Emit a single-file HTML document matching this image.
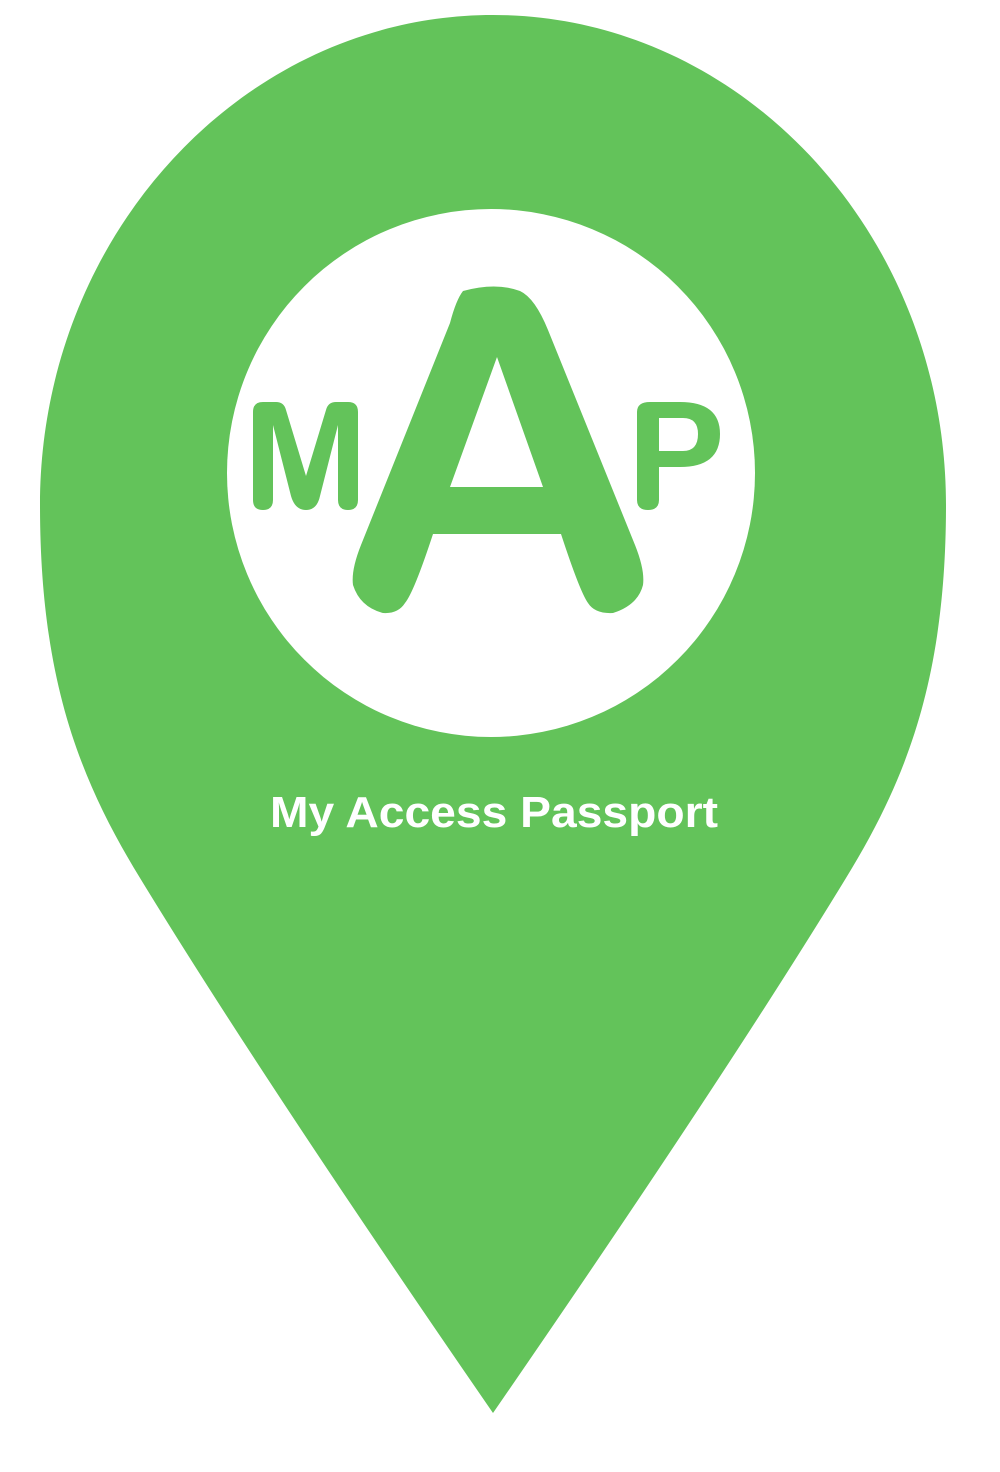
<!DOCTYPE html>
<html><head><meta charset="utf-8"><style>
html,body{margin:0;padding:0;background:#fff;width:1000px;height:1472px;overflow:hidden}
svg{display:block}
</style></head><body>
<svg width="1000" height="1472" viewBox="0 0 1000 1472" xmlns="http://www.w3.org/2000/svg">
<path d="M493 15 C 244 15 40 235 40 505 C 40 680 80 780 140 878 Q 262 1078 493 1413 Q 724 1078 846 878 C 906 780 946 680 946 505 C 946 235 742 15 493 15 Z" fill="#63c35a"/>
<circle cx="491" cy="473" r="264" fill="#fff"/>
<g fill="#63c35a">
<path fill-rule="evenodd" d="M463 291 Q496 282 520 291 Q535 298 548 330 L635 545 Q645 570 643 585 Q638 605 613 613 Q595 614 588 603 Q580 592 561 534 L433 534 Q414 592 405 603 Q398 614 383 613 Q360 607 353 585 Q351 570 361 545 L450 323 Q456 300 463 291 Z M497 357 L450 487 L543 487 Z"/>
<path d="M637 412 Q637 402 650 402 L680 402 Q720 402 720 434 Q720 467 680 467 L659 467 L659 500 Q659 510 648 510 Q637 510 637 500 Z M659 418 L659 451 L683 451 Q698 451 698 434 Q698 418 683 418 Z" fill-rule="evenodd"/>
<path d="M263 402 Q253 402 253 412 L253 500 Q253 510 263 510 Q273 510 273 500 L273 425 L291 496 Q295 510 306 510 Q317 510 320 496 L338 425 L338 500 Q338 510 348 510 Q358 510 358 500 L358 412 Q358 402 348 402 L336 402 Q328 402 326 410 L306 476 L286 410 Q284 402 276 402 Z"/>
</g>
<text x="270" y="827" textLength="448" lengthAdjust="spacingAndGlyphs" font-family="Liberation Sans, sans-serif" font-weight="bold" font-size="44" fill="#fff">My Access Passport</text>
</svg>
</body></html>
